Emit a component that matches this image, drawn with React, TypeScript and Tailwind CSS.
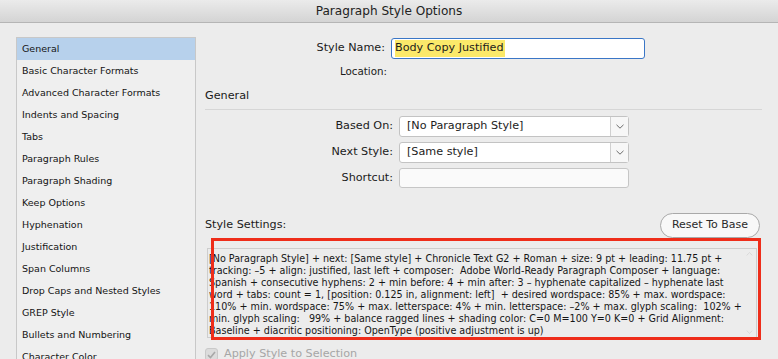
import React from "react";

const sections = [
  "General",
  "Basic Character Formats",
  "Advanced Character Formats",
  "Indents and Spacing",
  "Tabs",
  "Paragraph Rules",
  "Paragraph Shading",
  "Keep Options",
  "Hyphenation",
  "Justification",
  "Span Columns",
  "Drop Caps and Nested Styles",
  "GREP Style",
  "Bullets and Numbering",
  "Character Color",
];

const settings = [
  "[No Paragraph Style] + next: [Same style] + Chronicle Text G2 + Roman + size: 9 pt + leading: 11.75 pt +",
  "tracking: –5 + align: justified, last left + composer:  Adobe World-Ready Paragraph Composer + language:",
  "Spanish + consecutive hyphens: 2 + min before: 4 + min after: 3 – hyphenate capitalized – hyphenate last",
  "word + tabs: count = 1, [position: 0.125 in, alignment: left]  + desired wordspace: 85% + max. wordspace:",
  "110% + min. wordspace: 75% + max. letterspace: 4% + min. letterspace: –2% + max. glyph scaling:  102% +",
  "min. glyph scaling:   99% + balance ragged lines + shading color: C=0 M=100 Y=0 K=0 + Grid Alignment:",
  "Baseline + diacritic positioning: OpenType (positive adjustment is up)",
];

const font = { fontFamily: '"DejaVu Sans", "Liberation Sans", sans-serif' };

function Chevron() {
  return (
    <svg width="8" height="5" viewBox="0 0 8 5" className="text-[#6b6b6b]">
      <path d="M0.5 0.8 L4 4.2 L7.5 0.8" fill="none" stroke="currentColor" strokeWidth="1" />
    </svg>
  );
}

function SelectBox({ value }: { value: string }) {
  return (
    <div className="flex h-[21px] w-[230px] rounded-[3px] border border-[#c3c3c3] bg-white">
      <div className="flex flex-1 items-center px-[7px] text-[11.2px] text-[#1c1c1c]">{value}</div>
      <div className="flex w-[18px] items-center justify-center border-l border-[#d0d0d0] bg-[#f7f7f7]">
        <Chevron />
      </div>
    </div>
  );
}

function FieldRow({ label, children }: { label: string; children: React.ReactNode }) {
  return (
    <div className="flex items-center">
      <div className="w-[194px] pr-[6px] text-right text-[11.2px] text-[#1a1a1a]">{label}</div>
      {children}
    </div>
  );
}

export default function App() {
  return (
    <div style={font} className="relative h-[359px] w-[778px] overflow-hidden bg-[#ececec]">
      <div className="flex h-[23px] items-center justify-center border-b border-[#b5b5b5] bg-gradient-to-b from-[#ebebeb] to-[#d4d4d4] text-[12.1px] text-[#222]">
        Paragraph Style Options
      </div>

      <div className="flex pl-[16px] pt-[14px]">
        <div className="h-[340px] w-[180px] border border-[#c8c8c8] bg-[#efefef]">
          {sections.map((s, i) => (
            <div
              key={s}
              className={`flex h-[22px] items-center pl-[5px] text-[9.5px] text-[#141414] ${
                i === 0 ? "bg-[#b7d1ec]" : ""
              }`}
            >
              {s}
            </div>
          ))}
        </div>

        <div className="ml-[9px] flex w-[557px] flex-col">
          <div className="flex items-center pt-[1px]">
            <div className="w-[186px] pr-[6px] text-right text-[11.2px] text-[#1a1a1a]">Style Name:</div>
            <div className="flex h-[21px] w-[254px] items-center rounded-[3px] border-[1.5px] border-[#3a76c6] bg-white px-[3px]">
              <span className="bg-[#fbe96a] pr-[2px] text-[11.2px] text-[#1c1c1c]">Body Copy Justified</span>
            </div>
          </div>
          <div className="mt-[5px] w-[182px] text-right text-[10.3px] text-[#1a1a1a]">Location:</div>

          <div className="mt-[9px] text-[11.2px] text-[#1a1a1a]">General</div>
          <div className="mt-[4px] h-px bg-[#d6d6d6]" />

          <div className="mt-[6px] flex flex-col gap-[5px]">
            <FieldRow label="Based On:">
              <SelectBox value="[No Paragraph Style]" />
            </FieldRow>
            <FieldRow label="Next Style:">
              <SelectBox value="[Same style]" />
            </FieldRow>
            <FieldRow label="Shortcut:">
              <div className="h-[20px] w-[230px] rounded-[3px] border border-[#c6c6c6] bg-[#fafafa]" />
            </FieldRow>
          </div>

          <div className="mt-[25px] flex items-center justify-between pr-[2px]">
            <div className="text-[11.2px] text-[#1a1a1a]">Style Settings:</div>
            <div className="flex h-[25px] w-[100px] items-center justify-center rounded-full border border-[#a9a9a9] bg-[#f8f8f8] text-[11px] text-[#2a2a2a]">
              Reset To Base
            </div>
          </div>

          <div className="relative ml-[2px] mt-[10px] h-[90px] w-[550px] border border-[#cdcdcd] bg-[#ececec] pl-[1px] pt-[4px]">
            {settings.map((l, i) => (
              <div key={i} className="h-[12px] whitespace-pre text-[9.6px] leading-[12px] text-[#161616]">
                {l}
              </div>
            ))}
            <div className="absolute right-[3px] top-[3px] text-[#d4d4d4]">
              <svg width="7" height="4" viewBox="0 0 8 5">
                <path d="M0.5 4.2 L4 0.8 L7.5 4.2" fill="none" stroke="currentColor" strokeWidth="1" />
              </svg>
            </div>
            <div className="absolute bottom-[3px] right-[3px] text-[#d4d4d4]">
              <svg width="7" height="4" viewBox="0 0 8 5">
                <path d="M0.5 0.8 L4 4.2 L7.5 0.8" fill="none" stroke="currentColor" strokeWidth="1" />
              </svg>
            </div>
          </div>

          <div className="mt-[8px] flex items-center gap-[6px]">
            <div className="flex h-[13px] w-[13px] items-center justify-center rounded-[3px] border border-[#c9c9c9] bg-[#dcdcdc]">
              <svg width="9" height="8" viewBox="0 0 9 8">
                <path d="M1 4.2 L3.5 6.5 L8 1" fill="none" stroke="#a8a8a8" strokeWidth="1.6" />
              </svg>
            </div>
            <span className="text-[11.2px] text-[#a6a6a6]">Apply Style to Selection</span>
          </div>
        </div>
      </div>

      <div className="absolute left-[211px] top-[238px] h-[102px] w-[550px] border-[3px] border-[#ee2d1a]" />
    </div>
  );
}
